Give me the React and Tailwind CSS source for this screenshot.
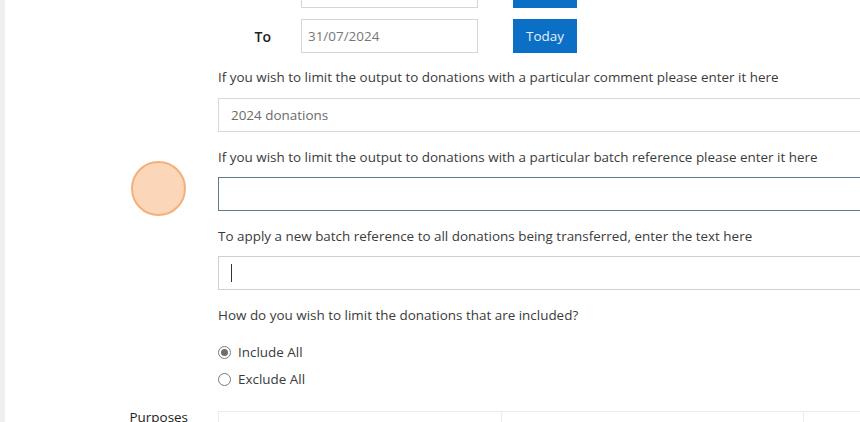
import React from "react";

export default function App() {
  return (
    <div
      className="relative w-[860px] h-[422px] overflow-hidden bg-white flex text-[13.45px] text-[#3b3b3b]"
      style={{ fontFamily: '"Open Sans", "Noto Sans", sans-serif' }}
    >
      <div className="w-[5px] shrink-0 bg-[#efefef]" />
      <div className="flex-1 flex flex-col -mt-[26px]">
        {/* From row (cut off) */}
        <div className="flex items-center h-[34px] pl-[213px]">
          <div className="w-[53px]" />
          <div className="ml-[30px] w-[177px] h-[34px] border border-[#d6d6d6] bg-white" />
          <div className="ml-[35px] w-[64px] h-[34px] bg-[#0b6fc6]" />
        </div>
        {/* To row */}
        <div className="flex items-center h-[34px] pl-[213px] mt-[11px]">
          <div className="w-[53px] text-right font-semibold text-[#222] text-[14px]">To</div>
          <div className="ml-[30px] w-[177px] h-[34px] border border-[#d6d6d6] bg-white flex items-center pl-[6px] text-[#777]">
            31/07/2024
          </div>
          <div className="ml-[35px] w-[64px] h-[34px] bg-[#0b6fc6] text-[#e8f1fa] flex items-center justify-center">
            Today
          </div>
        </div>

        <div className="pl-[213px] flex flex-col">
          <div className="mt-[14px] leading-[20px]">
            If you wish to limit the output to donations with a particular comment please enter it here
          </div>
          <div className="mt-[11px] h-[34px] border border-[#d8d8d8] border-r-0 flex items-center pl-[12px] text-[#6b6b6b]">
            2024 donations
          </div>

          <div className="mt-[15px] leading-[20px]">
            If you wish to limit the output to donations with a particular batch reference please enter it here
          </div>
          <div className="mt-[10px] h-[34px] border border-[#5c7d84] border-r-0" />

          <div className="mt-[15px] leading-[20px]">
            To apply a new batch reference to all donations being transferred, enter the text here
          </div>
          <div className="mt-[10px] h-[34px] border border-[#d0d0d0] border-r-0 flex items-center pl-[12px]">
            <div className="w-px h-[18px] bg-[#333]" />
          </div>

          <div className="mt-[15px] leading-[20px]">How do you wish to limit the donations that are included?</div>

          <div className="mt-[17px] flex items-center h-[20px]">
            <div className="w-[13px] h-[13px] rounded-full border border-[#7a7a7a] flex items-center justify-center">
              <div className="w-[7px] h-[7px] rounded-full bg-[#6e6e6e]" />
            </div>
            <span className="ml-[7px]">Include All</span>
          </div>
          <div className="mt-[7px] flex items-center h-[20px]">
            <div className="w-[13px] h-[13px] rounded-full border border-[#7a7a7a]" />
            <span className="ml-[7px]">Exclude All</span>
          </div>
        </div>

        {/* Purposes row */}
        <div className="mt-[22px] flex pl-[118px]">
          <div className="w-[65px] text-right text-[#222] leading-[20px] -mt-[4px]">Purposes</div>
          <div className="ml-[30px] flex-1 h-[40px] border border-[#ececec] border-r-0 flex">
            <div className="w-[283px] border-r border-[#ececec]" />
            <div className="w-[302px] border-r border-[#ececec]" />
          </div>
        </div>
      </div>

      {/* click marker */}
      <div className="absolute left-[131px] top-[161px] w-[55px] h-[55px] rounded-full bg-[#fcd6b8] border-2 border-[#f4b07a]" />
    </div>
  );
}
